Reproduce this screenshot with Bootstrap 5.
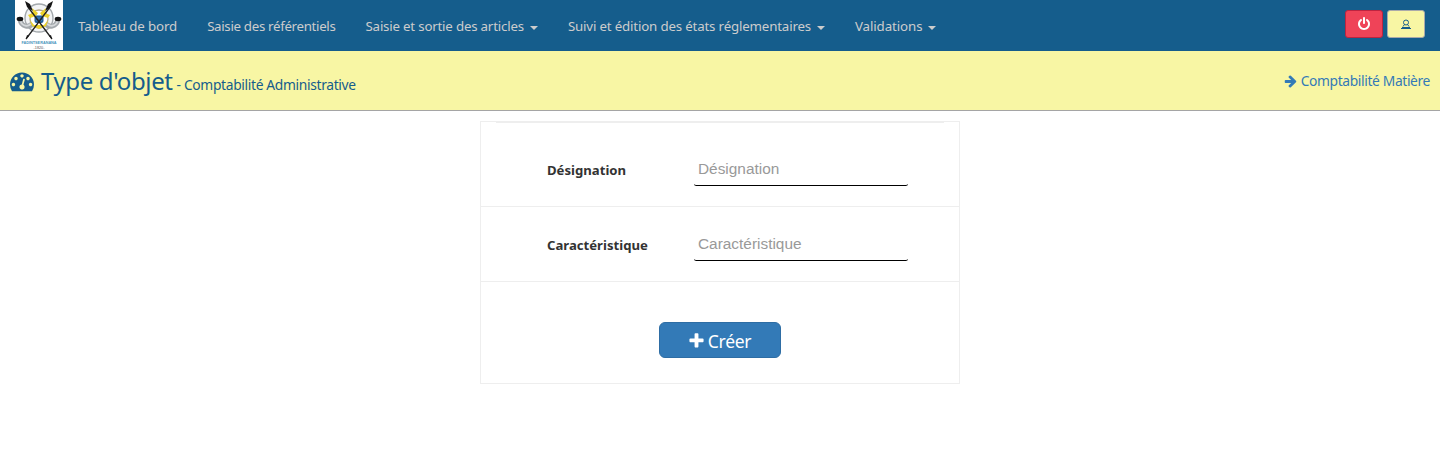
<!DOCTYPE html>
<html lang="fr">
<head>
<meta charset="utf-8">
<meta name="viewport" content="width=device-width, initial-scale=1">
<title>Type d'objet - Comptabilité Administrative</title>
<link href="https://cdn.jsdelivr.net/npm/bootstrap@5.3.0/dist/css/bootstrap.min.css" rel="stylesheet">
<style>
body{font-family:"Noto Sans","Open Sans",sans-serif;font-size:14px;line-height:20px;color:#333;background:#fff}
.topbar{height:51px;background:#155d8c;padding:0 15px}
.crest{width:48px;height:50px;display:block;overflow:visible}
.topbar .nav-link{color:#ccc;padding:16px 15px 15px;font-size:13.3px;line-height:20px;white-space:nowrap}
.ls-a{letter-spacing:-.11px}.ls-b{letter-spacing:-.32px}.ls-c{letter-spacing:-.2px}.ls-d{letter-spacing:-.17px}.ls-e{letter-spacing:-.1px}
.topbar .dropdown-toggle::after{margin-left:6px;border-top-width:4px;border-left-width:4px;border-right-width:4px;vertical-align:1px;letter-spacing:0}
.tools{padding-top:10px}
.tool{width:38px;height:28px;padding:0;border-radius:3px;line-height:1}
.tool-off{background:#ef4358;border-color:#bd2440;color:#fff}
.tool-user{background:#f8f6a4;border-color:#aaa;color:#155d8c}
.titlebar{height:60px;background:#f8f6a4;border-bottom:1px solid #a5a5a5;padding:0 10px;color:#155d8c}
.titlebar h1{font-size:24px;line-height:30px;font-weight:400;white-space:nowrap}
.dial{margin-right:7px}
.title-main{letter-spacing:-.37px;padding-top:5px}
.titlebar small{font-size:13.8px;letter-spacing:-.33px}
.other{color:#337ab7;font-size:13.8px}
.other-text{letter-spacing:-.36px}
.fa-svg{fill:currentColor;display:block}
.sheet{width:480px;margin-top:10px;border:1px solid #eee;height:263px}
.sheet-line{height:1px;margin:0 15px;background:#eee}
.field-row{height:75px;border-bottom:1px solid #eee;padding-left:66px}
.field-row.first{height:84px;padding-top:9px}
.field-row label{width:147px;font-weight:700;font-size:13.15px;padding-top:2px}
.field-row .form-control{width:214px;height:34px;padding:1px 4px 0;border:0;border-bottom:1px solid #000;border-radius:2.5px;font:15.4px "Liberation Sans",Arial,sans-serif;background:#fff}
.field-row .form-control::placeholder{color:#999;opacity:1}
.actions{padding-top:40px}
.make{width:122px;height:36px;padding:2px 0 0;background:#337ab7;border-color:#2e6da4;border-radius:6px;font-size:17.5px;letter-spacing:-.3px;line-height:24px;color:#fff}
</style>
</head>
<body>
<nav class="topbar d-flex align-items-start">
  <a href="#" aria-label="Accueil">
    <svg class="crest" viewBox="0 0 48 50">
      <rect width="48" height="50" fill="#fff"/>
      <circle cx="24" cy="18" r="14" fill="#f3f4f5" stroke="#a3a8ac" stroke-width="1.4"/>
      <g fill="none" stroke="#a3a8ac" stroke-width="5"><path d="M5 19C6 27 15 29 18 22M43 19C42 27 33 29 30 22"/></g>
      <g fill="none" stroke="#d5d8db" stroke-width="1.8"><path d="M5 20C7 27 15 28 17 21M43 20C41 27 33 28 31 21"/></g>
      <circle cx="24" cy="19" r="9" fill="#fff" stroke="#b5a98a" stroke-width="1.3"/>
      <path d="M17 8l6 5-2 3-6 2-2-3 5-2zM31 8l-6 5 2 3 6 2 2-3-5-2zM15 20l4 5h10l4-5-2 6-7 3-7-3z" fill="#ecd22d"/>
      <rect x="19.500" y="15.500" width="9" height="7.500" rx="2" fill="#24609b"/><path d="M21 18h6M21 20.500h6" stroke="#3f82b8"/>
      <path d="M13 7L37 39M35 7L11 39" stroke="#222" stroke-width="1.3"/>
      <g fill="#151515"><path d="M10 1l5 3 3 7-6-4zM38 1l-5 3-3 7 6-4zM37 39l-1-4-2 1zM11 39l1-4 2 1z"/><ellipse cx="5" cy="19" rx="3.300" ry="2.200"/><ellipse cx="43" cy="19" rx="3.300" ry="2.200"/></g>
      <text x="24" y="44" text-anchor="middle" font-size="3.800" font-weight="700" font-family="Liberation Sans,sans-serif" fill="#4a95bd">FADINTSERANANA</text>
      <text x="24" y="48.500" text-anchor="middle" font-size="3.800" font-family="Liberation Sans,sans-serif" fill="#555">-1820-</text>
    </svg>
  </a>
  <ul class="nav flex-nowrap">
    <li class="nav-item"><a class="nav-link ls-a" href="#">Tableau de bord</a></li>
    <li class="nav-item"><a class="nav-link ls-b" href="#">Saisie des référentiels</a></li>
    <li class="nav-item"><a class="nav-link dropdown-toggle ls-c" href="#">Saisie et sortie des articles</a></li>
    <li class="nav-item"><a class="nav-link dropdown-toggle ls-d" href="#">Suivi et édition des états réglementaires</a></li>
    <li class="nav-item"><a class="nav-link dropdown-toggle ls-e" href="#">Validations</a></li>
  </ul>
  <div class="tools d-flex gap-1 ms-auto">
    <button class="btn tool tool-off d-flex align-items-center justify-content-center" aria-label="Déconnexion"><svg class="fa-svg" width="14" height="14" viewBox="0 0 1792 1792"><path d="M1664 896q0 156-61 298t-164 245-245 164-298 61-298-61-245-164-164-245-61-298q0-182 80.500-343t226.500-270q43-32 95.500-25t83.500 50q32 42 24.500 94.500t-49.500 84.500q-98 74-151.500 181t-53.500 228q0 104 40.500 198.500t109.500 163.500 163.500 109.500 198.500 40.500 198.500-40.500 163.500-109.500 109.500-163.500 40.500-198.500q0-121-53.500-228t-151.500-181q-42-32-49.500-84.500t24.500-94.500q31-43 84-50t95 25q146 109 226.500 270t80.500 343zm-640-768v640q0 52-38 90t-90 38-90-38-38-90v-640q0-52 38-90t90-38 90 38 38 90z"/></svg></button>
    <button class="btn tool tool-user d-flex align-items-center justify-content-center" aria-label="Utilisateur"><svg width="10" height="10" viewBox="0 0 10 10" fill="none" stroke="currentColor"><circle cx="5" cy="3.500" r="2.500"/><path d="M3.500 5.500L2 7.500M6.500 5.500L8 7.500M1 8.500h8M0 9.500h10"/></svg></button>
  </div>
</nav>
<header class="titlebar d-flex align-items-center justify-content-between">
  <h1 class="d-flex align-items-baseline mb-0"><svg class="fa-svg dial align-self-center" width="24" height="24" viewBox="0 0 1792 1792"><path d="M384 1152q0-53-37.500-90.500t-90.500-37.500-90.500 37.500-37.500 90.500 37.500 90.500 90.500 37.500 90.500-37.500 37.500-90.500zm192-448q0-53-37.500-90.500t-90.500-37.500-90.500 37.500-37.500 90.500 37.500 90.500 90.500 37.500 90.500-37.500 37.500-90.500zm428 481l101-382q6-26-7.500-48.500t-38.500-29.500-48 6.500-30 39.500l-101 382q-60 5-107 43.500t-63 98.500q-20 77 20 146t117 89 146-20 89-117q16-60-6-117t-72-91zm660-33q0-53-37.500-90.500t-90.500-37.500-90.500 37.500-37.500 90.500 37.500 90.500 90.500 37.500 90.500-37.500 37.500-90.500zm-640-640q0-53-37.500-90.500t-90.500-37.500-90.500 37.500-37.500 90.500 37.500 90.500 90.500 37.500 90.500-37.500 37.500-90.500zm448 192q0-53-37.500-90.500t-90.500-37.500-90.500 37.500-37.500 90.500 37.500 90.500 90.500 37.500 90.500-37.500 37.500-90.500zm320 448q0 261-141 483-19 29-54 29h-1402q-35 0-54-29-141-221-141-483 0-182 71-348t191-286 286-191 348-71 348 71 286 191 191 286 71 348z"/></svg><span class="title-main">Type d'objet</span><small class="ms-1">- Comptabilité Administrative</small></h1>
  <a class="other d-flex align-items-center text-decoration-none" href="#"><svg class="fa-svg me-1" width="13" height="14" viewBox="128 0 1472 1792"><path d="M1600 960q0 54-37 91l-651 651q-39 37-91 37-51 0-90-37l-75-75q-38-38-38-91t38-91l293-293h-704q-52 0-84.500-37.500t-32.500-90.500v-128q0-53 32.500-90.500t84.500-37.500h704l-293-294q-38-36-38-90t38-90l75-75q38-38 90-38 53 0 91 38l651 651q37 35 37 90z"/></svg><span class="other-text">Comptabilité Matière</span></a>
</header>
<main>
  <form class="sheet mx-auto">
    <div class="sheet-line"></div>
    <div class="field-row first d-flex align-items-center"><label for="des">Désignation</label><input id="des" class="form-control" placeholder="Désignation"></div>
    <div class="field-row d-flex align-items-center"><label for="car">Caractéristique</label><input id="car" class="form-control" placeholder="Caractéristique"></div>
    <div class="actions d-flex justify-content-center"><button type="button" class="btn make d-flex align-items-center justify-content-center"><svg class="fa-svg me-1" width="15" height="18" viewBox="160 0 1472 1792"><path d="M1600 736v192q0 40-28 68t-68 28h-416v416q0 40-28 68t-68 28h-192q-40 0-68-28t-28-68v-416h-416q-40 0-68-28t-28-68v-192q0-40 28-68t68-28h416v-416q0-40 28-68t68-28h192q40 0 68 28t28 68v416h416q40 0 68 28t28 68z"/></svg><span>Créer</span></button></div>
  </form>
</main>
<script src="https://cdn.jsdelivr.net/npm/bootstrap@5.3.0/dist/js/bootstrap.bundle.min.js"></script>
</body>
</html>
